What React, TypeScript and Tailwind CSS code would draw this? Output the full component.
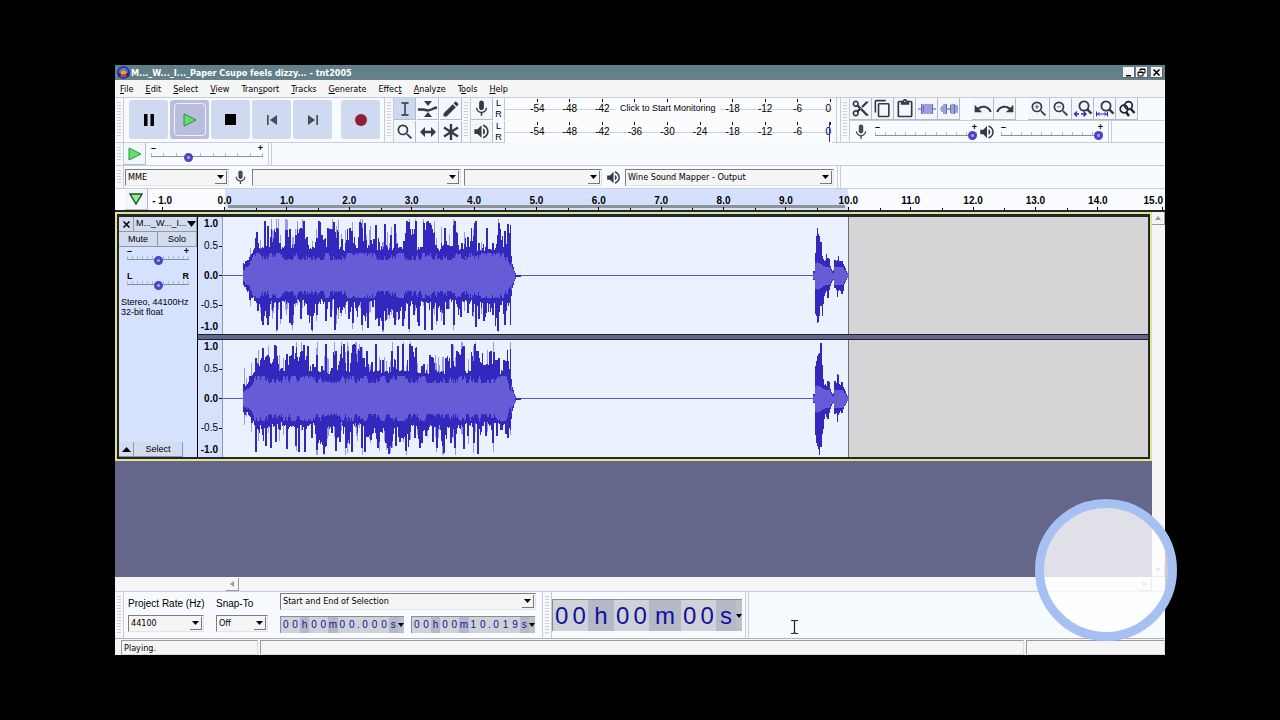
import React from "react";
import {
  MdContentCopy,
  MdContentCut,
  MdContentPaste,
  MdEdit,
  MdMic,
  MdRedo,
  MdSearch,
  MdSkipNext,
  MdSkipPrevious,
  MdUndo,
  MdVolumeUp,
  MdZoomIn,
  MdZoomOut,
} from "react-icons/md";

const UI = "font-['DejaVu_Sans_Condensed','Open_Sans',sans-serif]";
const ARIAL = "font-['Liberation_Sans',Arial,sans-serif]";

const MENUS = [
  { label: "File", key: 0 },
  { label: "Edit", key: 0 },
  { label: "Select", key: 0 },
  { label: "View", key: 0 },
  { label: "Transport", key: 4 },
  { label: "Tracks", key: 0 },
  { label: "Generate", key: 0 },
  { label: "Effect", key: 5 },
  { label: "Analyze", key: 0 },
  { label: "Tools", key: 1 },
  { label: "Help", key: 0 },
];

// Peak heights above and below the centre line, one value per 6 units
const PEAKS = [
  {
    up: [16, 27, 45, 57, 52, 50, 34, 49, 42, 50, 57, 30, 57, 42, 50, 56, 38, 50, 46, 56, 55, 38, 53, 54, 42, 54, 36, 57, 57, 30, 57, 55, 32, 50, 32, 57, 34, 40, 57, 34, 50, 34, 55, 46, 54, 22],
    down: [12, 25, 36, 50, 50, 56, 44, 48, 50, 44, 40, 56, 40, 46, 42, 56, 38, 44, 48, 50, 54, 32, 52, 56, 40, 50, 52, 55, 40, 52, 56, 56, 46, 50, 34, 50, 42, 38, 53, 44, 46, 40, 57, 50, 50, 20],
    burst: [5, 23, 40, 48, 42, 40, 34, 20, 17, 15, 16, 22, 18, 17, 10, 7, 5, 6, 16, 15, 16, 20, 15, 15, 15, 12, 10, 8, 5, 3],
    burstDown: [4, 38, 40, 47, 46, 40, 30, 40, 28, 20, 17, 15, 22, 14, 10, 7, 5, 4, 12, 14, 21, 15, 14, 15, 18, 15, 8, 6, 4, 2],
  },
  {
    up: [16, 24, 42, 53, 45, 56, 32, 46, 55, 50, 56, 36, 45, 57, 32, 50, 57, 50, 57, 54, 50, 38, 57, 40, 50, 55, 57, 57, 55, 34, 36, 45, 30, 42, 57, 50, 55, 26, 57, 50, 36, 50, 42, 40, 52, 45],
    down: [16, 25, 55, 48, 50, 44, 32, 52, 48, 55, 55, 40, 53, 57, 35, 54, 44, 50, 55, 50, 55, 42, 50, 45, 57, 48, 44, 54, 40, 50, 38, 44, 50, 56, 45, 50, 52, 38, 45, 57, 38, 45, 38, 36, 40, 30],
    burst: [5, 33, 38, 43, 45, 46, 56, 34, 20, 14, 15, 13, 18, 17, 10, 7, 5, 6, 18, 16, 25, 24, 15, 14, 17, 12, 10, 8, 5, 3],
    burstDown: [4, 36, 44, 47, 50, 56, 48, 35, 30, 20, 15, 18, 20, 14, 10, 7, 5, 4, 15, 14, 23, 16, 14, 12, 14, 10, 7, 6, 4, 2],
  },
];

function makeNoise(seed: number) {
  let s = seed;
  return () => {
    s = (s * 1103515245 + 12345) % 2147483648;
    return s / 2147483648;
  };
}

function buildWave(channel: number) {
  const { up, down, burst, burstDown } = PEAKS[channel];
  const rnd = makeNoise(71 + channel * 38);
  let peak = "";
  let thin = "";
  let rms = "";
  let spikeUp = 0;
  let spikeDown = 0;
  let drift = 0.7;
  let body = 19;
  for (let i = 0; i < 268; i++) {
    const x = 20 + i;
    const slot = Math.floor(i / 6);
    if (i % 6 === 0) {
      spikeUp = Math.floor(rnd() * 5);
      spikeDown = Math.floor(rnd() * 5);
    }
    drift = Math.min(0.94, Math.max(0.5, drift + (rnd() - 0.5) * 0.5));
    body = Math.min(23, Math.max(16, body + (rnd() - 0.5) * 9));
    const fade = Math.min(1, 0.35 + i / 18, 0.5 + (267 - i) / 8);
    const isUp = i % 6 === spikeUp || i % 6 === spikeUp + 1;
    const isDown = i % 6 === spikeDown || i % 6 === spikeDown + 1;
    const a = Math.max((25 + rnd() * 4) * fade, up[slot] * (isUp ? 0.97 : drift));
    const b = Math.max((23 + rnd() * 5) * fade, down[slot] * (isDown ? 0.97 : 1.4 - drift - rnd() * 0.1));
    peak += `M${x} ${(59 - a).toFixed(1)}h1V${Math.min(115, 59 + b).toFixed(1)}h-1z`;
    if (rnd() > 0.84) {
      const extra = 5 + rnd() * 11;
      thin += `M${x} ${Math.max(2, 59 - a - extra).toFixed(1)}h1V${Math.min(115, 59 + b + extra * 0.7).toFixed(1)}h-1z`;
    }
    rms += `M${x} ${(59 - body * fade).toFixed(1)}h1V${(59 + (body - 1) * fade).toFixed(1)}h-1z`;
  }
  // Fade out of the first clip
  [20, 12, 9, 5, 3, 1].forEach((h, i) => {
    peak += `M${288 + i} ${59 - h}h1V${59 + h}h-1z`;
    rms += `M${288 + i} ${59 - h * 0.7}h1V${59 + h * 0.7}h-1z`;
  });
  for (let i = 0; i < 35; i++) {
    const j = Math.floor((i * 30) / 35);
    const x = 591 + i;
    peak += `M${x} ${59 - burst[j]}h1V${59 + burstDown[j]}h-1z`;
    const r = Math.min(i < 14 ? 14 - Math.abs(i - 4) * 0.6 : 9, burst[j] * 0.7, burstDown[j] * 0.8);
    rms += `M${x} ${(59 - r).toFixed(1)}h1V${(59 + r).toFixed(1)}h-1z`;
  }
  return { peak, thin, rms };
}

const WAVES = [buildWave(0), buildWave(1)];

function Grabber() {
  return (
    <div className="flex w-[9px] shrink-0 border-r border-[#c9ccd4] bg-[#f6f7fa] px-[2px] py-1">
      <div className="w-full bg-[repeating-linear-gradient(to_bottom,#cdd0d6_0px,#cdd0d6_1px,transparent_1px,transparent_3px)]" />
    </div>
  );
}

type ToolProps = {
  label: string;
  active?: boolean;
  children: React.ReactNode;
};

function ToolButton({ label, active, children }: ToolProps) {
  return (
    <button
      type="button"
      aria-label={label}
      className={`flex h-[22px] w-[22px] shrink-0 items-center justify-center border-r border-b border-[#b4bac6] text-[#333a40] ${
        active ? "bg-[#ced8ee]" : "bg-[#f2f6fd]"
      }`}
    >
      {children}
    </button>
  );
}

function BigButton({ label, active, children }: ToolProps) {
  return (
    <button
      type="button"
      aria-label={label}
      className={`flex h-[39px] w-[39px] items-center justify-center rounded-[3px] ${
        active ? "bg-[#b9bedd]" : "bg-[#cfdaf0]"
      }`}
    >
      {children}
    </button>
  );
}

function Slider({
  label,
  value,
  ends = ["–", "+"],
  ticks = 10,
}: {
  label: string;
  value: number;
  ends?: string[];
  ticks?: number;
}) {
  return (
    <div className={`flex h-[18px] flex-col ${ARIAL} text-[9px] leading-[8px] font-bold text-black`}>
      <div className="flex justify-between">
        <span>{ends[0]}</span>
        <span>{ends[1]}</span>
      </div>
      <div className="relative flex h-[10px] items-center">
        <div className="absolute inset-x-0 top-[1px] flex h-[4px] justify-between border-b border-[#8b8f98]">
          {Array.from({ length: ticks + 1 }, (_, i) => (
            <span key={i} className="w-px bg-[#b7bac2]" />
          ))}
        </div>
        <input
          type="range"
          aria-label={label}
          defaultValue={value}
          className="relative h-[10px] w-full appearance-none bg-transparent [&::-webkit-slider-thumb]:h-[9px] [&::-webkit-slider-thumb]:w-[9px] [&::-webkit-slider-thumb]:appearance-none [&::-webkit-slider-thumb]:rounded-full [&::-webkit-slider-thumb]:border-[3px] [&::-webkit-slider-thumb]:border-[#4a45c4] [&::-webkit-slider-thumb]:bg-[#a9acec]"
        />
      </div>
    </div>
  );
}

function Combo({ label, value, width, id }: { label: string; value: string; width: string; id?: string }) {
  return (
    <div className={`relative h-[17px] ${width} border border-[#e4e4e4] border-t-[#7d7d7d] border-l-[#7d7d7d] bg-[#f5f5f5]`}>
      <select
        id={id}
        aria-label={label}
        className={`block h-[15px] w-full appearance-none pl-[2px] ${UI} text-[9px] leading-[15px] text-black`}
      >
        <option>{value}</option>
      </select>
      <span className="pointer-events-none absolute top-[1px] right-[1px] flex h-[13px] w-[12px] items-center justify-center border-r border-b border-[#777] bg-[#f5f5f5]">
        <svg width="7" height="4" viewBox="0 0 7 4">
          <path d="M0 0h7L3.5 4z" />
        </svg>
      </span>
    </div>
  );
}

function Meter({ monitor }: { monitor?: boolean }) {
  const marks = ["-54", "-48", "-42", "-36", "-30", "-24", "-18", "-12", "-6", "0"];
  return (
    <div className={`relative flex h-[22px] w-[328px] border-l border-[#c4c7ce] bg-[#fbfcfe] ${ARIAL} text-[10px] leading-[12px] text-black`}>
      <div className="absolute inset-x-0 top-[11px] h-px bg-[#cdd0d6]" />
      <div className="relative grid w-full grid-cols-[repeat(9,1fr)_18px] pl-4">
        {marks.map((m) => (
          <div key={m} className={`flex flex-col ${m === "0" ? "items-end pr-px" : "items-center"}`}>
            <span className="mt-px h-[3px] w-px bg-black" />
            <span className="mt-px">{monitor && ["-36", "-30", "-24"].includes(m) ? "" : m}</span>
          </div>
        ))}
      </div>
      {monitor ? (
        <button
          type="button"
          className="absolute top-[4px] left-[111px] bg-[#fbfcfe] px-1 text-[9px] leading-[13px] whitespace-nowrap"
        >
          Click to Start Monitoring
        </button>
      ) : (
        <span className="absolute inset-y-px right-[2px] w-px bg-[#2f2ab8]" />
      )}
    </div>
  );
}

function ZoomFit({ bars }: { bars?: boolean }) {
  return (
    <svg width="20" height="20" viewBox="0 0 20 20" fill="none">
      <circle cx="11" cy="7" r="4.6" stroke="#333a40" strokeWidth="1.8" />
      <path d="M14.2 10.4l4.3 4.3" stroke="#333a40" strokeWidth="2.4" />
      {bars ? (
        <path d="M1.500 12.500v5M12.500 12.500v5M2 15h10M4.500 13.500L2.500 15l2 1.500M9.500 13.500l2 1.500-2 1.500" stroke="#2d2ba6" />
      ) : (
        <path d="M1.500 15h4.500M8 15h5M4 12.500L1.500 15 4 17.500M10.500 12.500L13 15l-2.500 2.500" stroke="#2d2ba6" strokeWidth="1.4" />
      )}
    </svg>
  );
}

function ClipIcon({ silence }: { silence?: boolean }) {
  return (
    <svg width="20" height="16" viewBox="0 0 20 16">
      <path d="M1 8h18" stroke="#4d4f9c" />
      {silence ? (
        <path d="M2 5h2v6H2zM4 3h3v10H4zM12 3h3v10h-3zM15 4h4v8h-4z" fill="#9c9fe0" />
      ) : (
        <path d="M5 3h10v10H5z" fill="#9c9fe0" />
      )}
      {silence ? (
        <path d="M7.500 3v10M11.500 4v8M15.500 3v10" stroke="#6a6dab" />
      ) : (
        <path d="M4.500 3v10M15.500 3v10M6.500 5v6" stroke="#686bb5" />
      )}
    </svg>
  );
}

function Transport() {
  return (
    <div className="flex items-start border-r border-[#c9ccd4] pt-[2px] pr-[4px] pl-[5px]">
      <div className="flex gap-[2px]">
        <BigButton label="Pause">
          <svg width="12" height="12" viewBox="0 0 12 12">
            <path d="M1 0h3.500v12H1zM7.500 0H11v12H7.500z" />
          </svg>
        </BigButton>
        <BigButton label="Play" active>
          <span className="flex h-[33px] w-[32px] items-center justify-center rounded-[4px] border border-[#eef1fb]">
            <svg width="14" height="14" viewBox="0 0 14 14">
              <path d="M1 1l12 6L1 13z" fill="#62e262" stroke="#3c7a55" />
            </svg>
          </span>
        </BigButton>
        <BigButton label="Stop">
          <span className="h-[11px] w-[11px] bg-black" />
        </BigButton>
        <BigButton label="Skip to Start">
          <MdSkipPrevious size={20} color="#454c55" />
        </BigButton>
        <BigButton label="Skip to End">
          <MdSkipNext size={20} color="#454c55" />
        </BigButton>
      </div>
      <div className="ml-[9px]">
        <BigButton label="Record">
          <span className="h-[12px] w-[12px] rounded-full bg-[#8e1f35]" />
        </BigButton>
      </div>
    </div>
  );
}

function Tools() {
  return (
    <div className="grid grid-cols-3 content-start gap-px">
      <ToolButton label="Selection Tool" active>
        <svg width="10" height="14" viewBox="0 0 10 14" fill="none" stroke="#4c535c" strokeWidth="1.8">
          <path d="M1.500 1h7M1.500 13h7M5 1v12" />
        </svg>
      </ToolButton>
      <ToolButton label="Envelope Tool">
        <svg width="20" height="18" viewBox="0 0 20 18">
          <path d="M6 1h8l-4 5zM6 17h8l-4-5z" fill="#333a40" />
          <path d="M0 9.500h5l5 1c4-.5 5-2.500 9-3" fill="none" stroke="#333a40" strokeWidth="2.4" />
        </svg>
      </ToolButton>
      <ToolButton label="Draw Tool">
        <MdEdit size={20} />
      </ToolButton>
      <ToolButton label="Zoom Tool">
        <MdSearch size={20} />
      </ToolButton>
      <ToolButton label="Time Shift Tool">
        <svg width="18" height="12" viewBox="0 0 18 12">
          <path d="M1 6l5-5v3.800h6V1l5 5-5 5V7.200H6V11z" fill="#333a40" />
        </svg>
      </ToolButton>
      <ToolButton label="Multi-Tool">
        <svg width="18" height="18" viewBox="0 0 18 18" fill="none" stroke="#333a40" strokeWidth="2.4">
          <path d="M9 1v16M2 4.500l14 9M16 4.500l-14 9" />
        </svg>
      </ToolButton>
    </div>
  );
}

function MeterBars() {
  return (
    <div className="flex flex-col gap-px">
      {["Record Meter", "Playback Meter"].map((name, i) => (
        <div key={name} className="flex">
          <ToolButton label={name}>{i === 0 ? <MdMic size={19} /> : <MdVolumeUp size={19} />}</ToolButton>
          <div className={`flex w-[11px] flex-col items-center ${ARIAL} text-[9px] leading-[11px] text-black`}>
            <span>L</span>
            <span>R</span>
          </div>
          <Meter monitor={i === 0} />
        </div>
      ))}
    </div>
  );
}

function EditBars() {
  return (
    <div className="flex flex-1 flex-col">
      <div className="flex h-[23px] border-b border-[#c9ccd4]">
        <ToolButton label="Cut">
          <MdContentCut size={19} />
        </ToolButton>
        <ToolButton label="Copy">
          <MdContentCopy size={19} />
        </ToolButton>
        <ToolButton label="Paste">
          <MdContentPaste size={20} />
        </ToolButton>
        <ToolButton label="Trim">
          <ClipIcon />
        </ToolButton>
        <ToolButton label="Silence">
          <ClipIcon silence />
        </ToolButton>
        <div className="ml-[12px] flex">
          <ToolButton label="Undo">
            <MdUndo size={20} />
          </ToolButton>
          <ToolButton label="Redo">
            <MdRedo size={20} />
          </ToolButton>
        </div>
        <div className="ml-[12px] flex">
          <ToolButton label="Zoom In">
            <MdZoomIn size={20} />
          </ToolButton>
          <ToolButton label="Zoom Out">
            <MdZoomOut size={20} />
          </ToolButton>
          <ToolButton label="Fit Selection">
            <ZoomFit />
          </ToolButton>
          <ToolButton label="Fit Project">
            <ZoomFit bars />
          </ToolButton>
          <ToolButton label="Zoom Toggle">
            <svg width="18" height="18" viewBox="0 0 18 18" fill="none" stroke="#1d2126" strokeWidth="1.7">
              <circle cx="10.500" cy="5.500" r="3.800" />
              <circle cx="6" cy="9" r="3.800" />
              <path d="M12.500 8.500l4 4.500M8 12l3 4" strokeWidth="2.400" />
            </svg>
          </ToolButton>
        </div>
      </div>
      <div className="flex">
        <div className="flex h-[21px] items-center gap-px border-r border-[#c9ccd4] pr-[5px] pl-[2px]">
          <div className="flex items-center gap-[5px]">
            <MdMic size={18} color="#454c55" />
            <div className="w-[102px]">
              <Slider label="Recording Volume" value={100} />
            </div>
          </div>
          <div className="flex items-center gap-[5px]">
            <MdVolumeUp size={18} color="#333a40" />
            <div className="w-[102px]">
              <Slider label="Playback Volume" value={100} />
            </div>
          </div>
        </div>
        <div className="ml-[2px] border-l border-[#c9ccd4]" />
      </div>
    </div>
  );
}

function TimeRuler() {
  const marks = Array.from({ length: 16 }, (_, i) => (i === 0 ? "- 1.0" : `${i - 1}.0`));
  return (
    <div className={`flex h-6 border-t border-b-2 border-t-[#c9ccd4] border-b-[#23262e] bg-[#fbfcff] pl-4 ${ARIAL} text-[10px] leading-[12px] font-bold text-black`}>
      <div className="relative grid flex-1 grid-cols-[repeat(16,1fr)]">
        <div className="absolute inset-y-0 left-[9.375%] w-[62.5%] bg-[#d5e0fd]" />
        <div className="absolute top-[16px] left-[9.375%] flex h-[3px] w-[62.5%] px-[3px]">
          <div className="w-full bg-[#8d929c]" />
        </div>
        {marks.map((m, i) => (
          <div key={m} className="relative flex flex-col items-center justify-between pt-[6px]">
            {i > 1 && <span className="absolute bottom-0 left-0 h-[3px] w-px bg-black" />}
            <span>{m}</span>
            <span className="h-1 w-px bg-black" />
          </div>
        ))}
        <button
          type="button"
          aria-label="Pinned Play Head"
          className="absolute top-0 left-[-6px] flex h-[21px] w-[23px] items-center justify-center border-r border-b border-[#b4bac6] bg-[#f2f6fd]"
        >
          <svg width="14" height="12" viewBox="0 0 14 12">
            <path d="M1 1h12L7 11z" fill="#8df08d" stroke="#1e4d2b" strokeWidth="1.400" />
          </svg>
        </button>
      </div>
      <div className="flex w-9 flex-col items-end justify-between pt-[6px] pr-[2px]">
        <span>15.0</span>
        <span className="h-1 w-px bg-black" />
      </div>
    </div>
  );
}

function TrackPanel() {
  const btn = "border-r border-b border-[#8f97ab] bg-[#d3dbee] text-center";
  return (
    <div className={`flex w-[79px] shrink-0 flex-col border-r border-black bg-[#d6e1fd] ${ARIAL} text-[9px] text-black`}>
      <div className="flex h-[15px]">
        <button type="button" aria-label="Close track" className={`flex w-[15px] items-center justify-center ${btn}`}>
          <svg width="7" height="7" viewBox="0 0 7 7" stroke="black" strokeWidth="1.500">
            <path d="M.5.5l6 6M6.500.5l-6 6" />
          </svg>
        </button>
        <button type="button" className={`flex flex-1 items-center justify-between pl-[2px] ${btn}`}>
          <span>M..._W..._I...</span>
          <svg width="9" height="6" viewBox="0 0 9 6">
            <path d="M0 0h9L4.500 6z" />
          </svg>
        </button>
      </div>
      <div className="grid h-[14px] grid-cols-2 leading-[14px]">
        <button type="button" className={btn}>
          Mute
        </button>
        <button type="button" className={btn}>
          Solo
        </button>
      </div>
      <div className="flex flex-col gap-[7px] px-2 pt-px">
        <Slider label="Gain" value={50} ticks={12} />
        <Slider label="Pan" value={50} ends={["L", "R"]} ticks={12} />
      </div>
      <div className="flex-1 pt-[7px] pl-[2px] leading-[10px] whitespace-nowrap">
        <p>Stereo, 44100Hz</p>
        <p>32-bit float</p>
      </div>
      <div className="flex h-[15px] leading-[14px]">
        <button type="button" aria-label="Collapse" className={`flex w-[15px] items-center justify-center ${btn}`}>
          <svg width="9" height="5" viewBox="0 0 9 5">
            <path d="M0 5h9L4.500 0z" />
          </svg>
        </button>
        <button type="button" className={`w-[49px] ${btn}`}>
          Select
        </button>
      </div>
    </div>
  );
}

function Channel({ index }: { index: number }) {
  const wave = WAVES[index];
  return (
    <div className="flex h-[117px]">
      <div className={`grid w-[25px] shrink-0 grid-rows-[14px_30px_29px_30px_14px] border-r border-[#8f97ab] bg-[#d6e1fd] text-right ${ARIAL} text-[10px] leading-[12px] text-black`}>
        {["1.0", "0.5", "0.0", "-0.5", "-1.0"].map((v) => (
          <div key={v} className="flex items-center justify-end">
            <span className={v.endsWith("5") ? "" : "font-bold"}>{v}</span>
            <span className={`ml-px h-px w-[3px] ${v.endsWith("1.0") ? "" : "bg-black"}`} />
          </div>
        ))}
      </div>
      <div className="flex-[626] border-r border-[#6b7180] bg-[#e9f2fe]">
        <svg className="block h-full w-full" viewBox="0 0 626 117" preserveAspectRatio="none" shapeRendering="crispEdges">
          <path d="M0 58.500h626" stroke="#5a58b8" />
          <path d={wave.thin} fill="#9a98e8" />
          <path d={wave.peak} fill="#3328bd" />
          <path d={wave.rms} fill="#655cd6" />
          <path d="M292 58h6v2h-6z" fill="#3328bd" />
        </svg>
      </div>
      <div className="flex-[299] bg-[#d5d5d5]" />
    </div>
  );
}

function TimeCode({ text, big }: { text: string; big?: boolean }) {
  return (
    <div
      className={`flex border-t border-l border-[#8a8d94] bg-[#b9bdc9] ${ARIAL} text-[#14109c] ${
        big ? "h-8 w-[190px] text-[24px] leading-[32px]" : "h-[17px] w-[124px] text-[10px] leading-[16px]"
      }`}
    >
      {text.split("").map((c, i) => {
        const unit = /[hms]/.test(c);
        let width = "flex-1";
        if (c === ".") width = "w-1";
        if (big) width = c === "h" ? "w-[26px]" : c === "m" ? "w-8" : c === "s" ? "w-5" : "flex-1";
        return (
          <span key={i} className={`${width} text-center ${unit ? "bg-[#b4b9c8]" : "bg-[#cfd2d6]"}`}>
            {c}
          </span>
        );
      })}
      <button type="button" aria-label="Format" className="flex w-[6px] items-center justify-center bg-[#bcc0ca]">
        <svg width="6" height="4" viewBox="0 0 6 4">
          <path d="M0 0h6L3 4z" />
        </svg>
      </button>
    </div>
  );
}

function SelectionBar() {
  return (
    <div className="flex h-[47px] border-t border-[#c9ccd4] bg-[#f7faff]">
      <Grabber />
      <div className={`flex gap-3 pl-[4px] ${ARIAL} text-[10px] text-black`}>
        <div className="flex w-[76px] flex-col gap-[4px] pt-[5px]">
          <label htmlFor="rate" className="leading-[14px] whitespace-nowrap">
            Project Rate (Hz)
          </label>
          <Combo id="rate" label="Project Rate" value="44100" width="w-[76px]" />
        </div>
        <div className="flex flex-col gap-[4px] pt-[5px]">
          <label htmlFor="snap" className="leading-[14px]">
            Snap-To
          </label>
          <Combo id="snap" label="Snap-To" value="Off" width="w-[52px]" />
        </div>
        <div className="flex flex-col gap-[6px] pt-px">
          <Combo label="Selection mode" value="Start and End of Selection" width="w-[256px]" />
          <div className="flex gap-[7px]">
            <TimeCode text="00h00m00.000s" />
            <TimeCode text="00h00m10.019s" />
          </div>
        </div>
      </div>
      <div className="ml-[6px] border-l border-[#c9ccd4]" />
      <Grabber />
      <div className="border-r border-[#c9ccd4] pt-[7px] pr-[3px]">
        <TimeCode text="00h00m00s" big />
      </div>
      <div className="ml-[2px] border-l border-[#c9ccd4]" />
    </div>
  );
}

function ScrollButton({ d }: { d: string }) {
  return (
    <button
      type="button"
      aria-label="Scroll"
      className="flex h-[13px] w-[13px] items-center justify-center border-r border-b border-[#9a9a9a] bg-[#f5f5f5]"
    >
      <svg width="6" height="6" viewBox="0 0 6 6" fill="#9a9a9a">
        <path d={d} />
      </svg>
    </button>
  );
}

function TitleBar() {
  const btn = "flex h-[11px] w-[12px] items-center justify-center border-r border-b border-[#666] bg-[#f3f3f3]";
  return (
    <div className="flex h-[15px] items-center bg-linear-to-b from-[#5f7f8c] to-[#648187] pr-[2px] pl-[2px]">
      <svg width="13" height="13" viewBox="0 0 13 13" fill="none">
        <circle cx="6.500" cy="6.500" r="5.500" stroke="#2a35b8" strokeWidth="2" />
        <path d="M4 8V6l2.500-2L9 6v2z" fill="#f2a03a" />
        <path d="M3 8h7v2.500H3z" fill="#d93a2a" />
        <path d="M1 7h2.500v4H1zM9.500 7H12v4H9.500z" fill="#1d2690" />
      </svg>
      <h1 className={`flex-1 pt-px pl-px ${UI} text-[9px] leading-[14px] font-bold text-white`}>
        M..._W..._I..._Paper Csupo feels dizzy... - tnt2005
      </h1>
      <div className="flex">
        <button type="button" aria-label="Minimize" className={btn}>
          <svg width="9" height="9" viewBox="0 0 9 9">
            <path d="M2 7h5v1.500H2z" />
          </svg>
        </button>
        <button type="button" aria-label="Restore" className={`mr-[3px] ml-px ${btn}`}>
          <svg width="9" height="9" viewBox="0 0 9 9" fill="none" stroke="black">
            <path d="M3 3V1h5v4H6M1 4h5v4H1zM1 4.500h5M3 1.500h5" />
          </svg>
        </button>
        <button type="button" aria-label="Close" className={btn}>
          <svg width="9" height="9" viewBox="0 0 9 9" stroke="black" strokeWidth="1.600">
            <path d="M1.500 1.500l6 6M7.500 1.500l-6 6" />
          </svg>
        </button>
      </div>
    </div>
  );
}

export default function App() {
  return (
    <div className="relative flex min-h-screen bg-black px-[115px] py-[65px]">
      <main className="flex min-w-0 flex-1 flex-col overflow-hidden bg-[#f7faff]">
        <TitleBar />
        <nav className={`flex h-[17px] items-center gap-[12px] bg-[#f5f5f5] pt-px pl-[5px] ${UI} text-[9px] text-black`}>
          {MENUS.map(({ label, key }) => (
            <button key={label} type="button" className="leading-[16px]">
              {label.slice(0, key)}
              <span className="underline">{label[key]}</span>
              {label.slice(key + 1)}
            </button>
          ))}
        </nav>

        <div className="flex h-[45px] border-t border-[#c9ccd4]">
          <Grabber />
          <Transport />
          <Grabber />
          <Tools />
          <Grabber />
          <MeterBars />
          <div className="ml-[4px] border-l border-[#c9ccd4]" />
          <div className="ml-[3px] flex border-l border-[#c9ccd4]">
            <Grabber />
          </div>
          <EditBars />
        </div>

        <div className="flex h-[23px] border-t border-[#c9ccd4]">
          <Grabber />
          <ToolButton label="Play at Speed">
            <svg width="14" height="14" viewBox="0 0 14 14">
              <path d="M1 1l12 6L1 13z" fill="#62e262" stroke="#3c8a55" />
            </svg>
          </ToolButton>
          <div className="w-[123px] border-r border-[#c9ccd4] pt-px pr-[5px] pl-[5px]">
            <Slider label="Playback Speed" value={32} ticks={9} />
          </div>
          <div className="ml-[2px] border-l border-[#c9ccd4]" />
        </div>

        <div className="flex h-[23px] border-t border-[#c9ccd4]">
          <Grabber />
          <div className="flex items-center gap-[3px] border-r border-[#c9ccd4] pr-[3px] pl-px">
            <Combo label="Audio Host" value="MME" width="w-[104px]" />
            <MdMic size={17} color="#454c55" />
            <Combo label="Recording Device" value="" width="w-[209px]" />
            <Combo label="Recording Channels" value="" width="w-[138px]" />
            <MdVolumeUp size={17} color="#333a40" />
            <Combo label="Playback Device" value="Wine Sound Mapper - Output" width="w-[209px]" />
          </div>
          <div className="ml-[2px] border-l border-[#c9ccd4]" />
        </div>

        <TimeRuler />

        <div className="flex flex-1 bg-[#64668a]">
          <div className="min-w-0 flex-1">
            <div className="border-2 border-[#e2e48a] bg-[#23262e] p-[2px] pt-[3px]">
              <div className="flex">
                <TrackPanel />
                <div className="flex min-w-0 flex-1 flex-col">
                  <Channel index={0} />
                  <div className="h-[6px] border-y border-[#1d1f2c] bg-[#64668a]" />
                  <Channel index={1} />
                </div>
              </div>
            </div>
          </div>
          <div className="flex w-[13px] flex-col justify-between bg-[#f5f5f5]">
            <ScrollButton d="M0 5h6L3 1z" />
            <ScrollButton d="M0 1h6L3 5z" />
          </div>
        </div>

        <div className="flex h-[14px] items-center justify-between bg-[#f5f5f5] pr-[13px] pl-[111px]">
          <ScrollButton d="M5 0v6L1 3z" />
          <ScrollButton d="M1 0v6l4-3z" />
        </div>

        <SelectionBar />

        <footer className={`flex h-[17px] gap-[2px] border-t border-[#b4b4b4] bg-[#f5f5f5] pt-px pl-[6px] ${UI} text-[9px] text-black`}>
          <p className="w-[137px] border border-[#dcdcdc] border-t-[#9a9a9a] border-l-[#9a9a9a] pl-[2px] leading-[14px]">Playing.</p>
          <p className="flex-1 border border-[#dcdcdc] border-t-[#9a9a9a] border-l-[#9a9a9a]" />
          <p className="w-[139px] border border-[#dcdcdc] border-t-[#9a9a9a] border-l-[#9a9a9a]" />
        </footer>
      </main>

      {/* Floating assistive button */}
      <button
        type="button"
        aria-label="Assistive touch"
        className="absolute right-[103px] bottom-[79px] h-[142px] w-[142px] rounded-full border-[9px] border-[#a6c0f1] bg-white/80"
      />
      <svg className="absolute top-[620px] left-[790px]" width="9" height="14" viewBox="0 0 9 14" fill="none" stroke="#222">
        <path d="M1 .5h2.500l1 1 1-1H8M1 13.500h2.500l1-1 1 1H8M4.500 1v12" strokeWidth="1.200" />
      </svg>
    </div>
  );
}
